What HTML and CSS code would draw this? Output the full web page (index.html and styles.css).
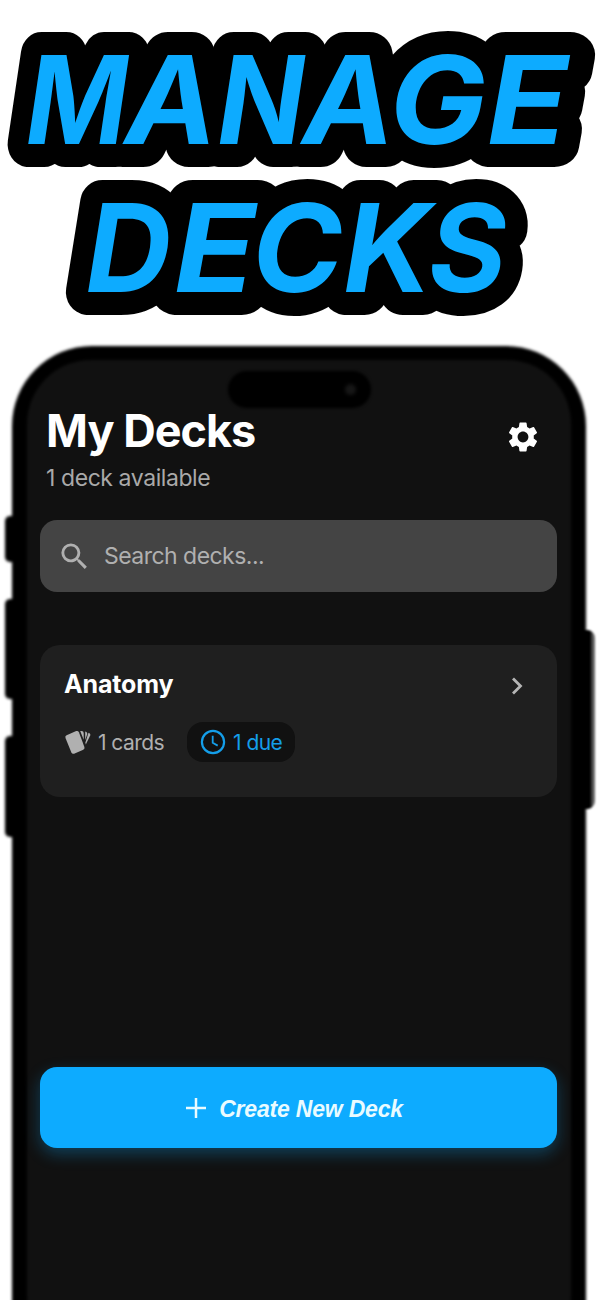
FILE: index.html
```
<!DOCTYPE html>
<html lang="en">
<head>
<meta charset="utf-8">
<title>Manage Decks</title>
<link rel="stylesheet" href="styles.css">
</head>
<body>
<svg class="headline" width="598" height="340" viewBox="0 0 598 340" role="img">
  <use class="outline" href="#words"/>
  <g class="fill">
    <g id="words">
      <text y="144"><tspan x="25.9" textLength="102" lengthAdjust="spacingAndGlyphs">M</tspan><tspan x="125" textLength="92" lengthAdjust="spacingAndGlyphs">A</tspan><tspan x="217.4" textLength="87" lengthAdjust="spacingAndGlyphs">N</tspan><tspan x="302.5" textLength="92" lengthAdjust="spacingAndGlyphs">A</tspan><tspan x="389.3" textLength="96.9" lengthAdjust="spacingAndGlyphs">G</tspan><tspan x="487" textLength="81.2" lengthAdjust="spacingAndGlyphs">E</tspan></text>
      <text y="292"><tspan x="85.8" textLength="85.4" lengthAdjust="spacingAndGlyphs">D</tspan><tspan x="174" textLength="81.8" lengthAdjust="spacingAndGlyphs">E</tspan><tspan x="252" textLength="90.4" lengthAdjust="spacingAndGlyphs">C</tspan><tspan x="343.4" textLength="88.2" lengthAdjust="spacingAndGlyphs">K</tspan><tspan x="428.5" textLength="77.8" lengthAdjust="spacingAndGlyphs">S</tspan></text>
    </g>
  </g>
</svg>
<main class="phone">
  <div class="frame">
    <i class="key key-action"></i><i class="key key-up"></i><i class="key key-down"></i><i class="key key-power"></i>
    <div class="body"></div>
    <div class="screen"></div>
    <div class="island"><i class="lens"></i></div>
  </div>
  <header class="header">
    <div class="titles">
      <h1 class="title">My Decks</h1>
      <p class="subtitle">1 deck available</p>
    </div>
    <svg class="gear" viewBox="0 0 24 24" width="36" height="36"><path fill="#fff" d="M19.14 12.94c.04-.3.06-.61.06-.94 0-.32-.02-.64-.07-.94l2.03-1.58a.49.49 0 0 0 .12-.61l-1.92-3.32a.488.488 0 0 0-.59-.22l-2.39.96c-.5-.38-1.03-.7-1.62-.94l-.36-2.54a.484.484 0 0 0-.48-.41h-3.84c-.24 0-.43.17-.47.41l-.36 2.54c-.59.24-1.13.57-1.62.94l-2.39-.96c-.22-.08-.47 0-.59.22L2.74 8.87c-.12.21-.08.47.12.61l2.03 1.58c-.05.3-.09.63-.09.94s.02.64.07.94l-2.03 1.58a.49.49 0 0 0-.12.61l1.92 3.32c.12.22.37.29.59.22l2.39-.96c.5.38 1.03.7 1.62.94l.36 2.54c.05.24.24.41.48.41h3.84c.24 0 .44-.17.47-.41l.36-2.54c.59-.24 1.13-.56 1.62-.94l2.39.96c.22.08.47 0 .59-.22l1.92-3.32c.12-.22.07-.47-.12-.61l-2.01-1.58zM12 15.6c-1.98 0-3.6-1.62-3.6-3.6s1.62-3.6 3.6-3.6 3.6 1.62 3.6 3.6-1.62 3.6-3.6 3.6z"/></svg>
  </header>
  <div class="search">
    <svg viewBox="0 0 24 24" width="35" height="35"><path fill="#b0b0b0" d="M15.5 14h-.79l-.28-.27A6.47 6.47 0 0 0 16 9.5 6.5 6.5 0 1 0 9.5 16c1.61 0 3.09-.59 4.23-1.57l.27.28v.79l5 4.99L20.49 19l-4.99-5zm-6 0C7.01 14 5 11.99 5 9.5S7.01 5 9.5 5 14 7.01 14 9.5 11.99 14 9.5 14z"/></svg>
    <span class="placeholder">Search decks...</span>
  </div>
  <section class="card">
    <div class="card-top">
      <h2 class="card-title">Anatomy</h2>
      <svg class="chevron" viewBox="0 0 13 18" width="13" height="18"><path d="M2 1.5 9.5 9 2 16.5" fill="none" stroke="#b5b5b5" stroke-width="2.8"/></svg>
    </div>
    <div class="card-meta">
      <svg viewBox="0 0 27 25" width="27" height="25"><g fill="#b0b0b0"><path d="M2.6 5.2 12.2 1.1Q14.1.4 14.9 2.2L20.4 17Q21 18.9 19.3 19.7L10.1 23.7Q8.2 24.3 7.4 22.6L1.5 7.9Q.8 6 2.6 5.2Z"/><path d="M16.2 1.1h1.3q2.2 0 2.2 1.9v6.8Z"/><path d="M21.2 1.5 22.4 2.1Q23.6 2.8 23.2 4.3L21.2 10.1Z"/><path d="M24.5 2.8 25.5 3.3Q26.8 4 26.2 5.5L21.8 14.6 21.4 12.6Z"/></g></svg>
      <span class="count">1 cards</span>
      <span class="due">
        <svg viewBox="0 0 26 26" width="26" height="26" fill="none" stroke="#149ee9"><circle cx="13" cy="13" r="11.1" stroke-width="2.2"/><path d="M12.7 6.8v7l5 2.8" stroke-width="1.8"/></svg>
        <span>1 due</span>
      </span>
    </div>
  </section>
  <div class="create">
    <svg viewBox="0 0 22 22" width="22" height="22"><path d="M11 1v20M1 11h20" stroke="#e9fbff" stroke-width="2.5"/></svg>
    <span class="create-label">Create New Deck</span>
  </div>
</main>
</body>
</html>
```
FILE: styles.css
```
* { box-sizing: border-box; }
body { margin: 0; width: 598px; height: 1300px; overflow: hidden; background: #fff; font-family: Inter, "Liberation Sans", sans-serif; }
h1, h2, p { margin: 0; }
svg { display: block; flex: none; }
.headline text { font: italic 700 122px Inter, sans-serif; }
.headline .fill { fill: #0dabff; }
.headline .outline { fill: #000; stroke: #000; stroke-width: 46px; stroke-linejoin: round; }
.phone { position: relative; height: 960px; padding: 66px 41px 0 40px; overflow: hidden; }

/* Device shell behind the app */
.frame { position: absolute; inset: 0; z-index: -1; }
.body { position: absolute; left: 12px; top: 6px; width: 574px; height: 1100px; border-radius: 80px; background: #000; filter: blur(1.8px); }
.screen { position: absolute; left: 27px; top: 20px; width: 544px; height: 1000px; border-radius: 64px; background: #111; filter: blur(1.5px); }
.island { position: absolute; left: 228px; top: 31px; width: 143px; height: 37px; border-radius: 19px; background: #000; filter: blur(1.5px); }
.lens { position: absolute; left: 117px; top: 13px; width: 11px; height: 11px; border-radius: 50%; background: #161616; filter: blur(1px); }
.key { position: absolute; left: 5px; width: 20px; border-radius: 5px; background: #000; filter: blur(1.5px); }
.key-action { top: 176px; height: 46px; }
.key-up { top: 259px; height: 100px; }
.key-down { top: 396px; height: 101px; }
.key-power { left: 573px; top: 290px; width: 22px; height: 179px; border-radius: 5px 8px 8px 5px; background: linear-gradient(90deg, #000 17px, #666 20px); filter: blur(.8px); }

.header { display: flex; justify-content: space-between; height: 114px; padding: 0 16px 0 6px; }
.title { font-size: 45px; line-height: 50px; font-weight: 700; letter-spacing: -1px; color: #fff; }
.subtitle { margin-top: 8px; font-size: 23px; line-height: 28px; letter-spacing: -.42px; color: #a9a9a9; }
.gear { margin-top: 13px; }

.search { display: flex; align-items: center; gap: 12px; height: 72px; padding: 0 17px; border-radius: 17px; background: #444; }
.placeholder { font-size: 23px; letter-spacing: -.53px; color: #b0b0b0; }

.card { height: 152px; margin-top: 53px; padding: 22px 33px 0 24px; border-radius: 20px; background: #1f1f1f; }
.card-top { display: flex; justify-content: space-between; align-items: center; height: 34px; }
.card-title { font-size: 25px; font-weight: 700; letter-spacing: -.15px; color: #fff; }
.chevron { margin-top: 3px; }
.card-meta { display: flex; align-items: center; margin-top: 21px; font-size: 21px; letter-spacing: -.55px; color: #b0b0b0; }
.count { margin-left: 7px; }
.due { display: flex; align-items: center; gap: 7px; width: 108px; height: 40px; margin-left: 23px; padding-left: 13px; border-radius: 16px; background: #111; color: #149ee9; }

.create { display: flex; align-items: center; justify-content: center; gap: 12px; height: 81px; margin-top: 270px; padding-right: 9px; border-radius: 17px; background: #0dabff; box-shadow: 0 6px 16px rgba(13,171,255,.3); color: #e9fbff; font: italic 700 23px "Liberation Sans", sans-serif; }
.create-label { margin-top: 3px; letter-spacing: -.2px; }
```
